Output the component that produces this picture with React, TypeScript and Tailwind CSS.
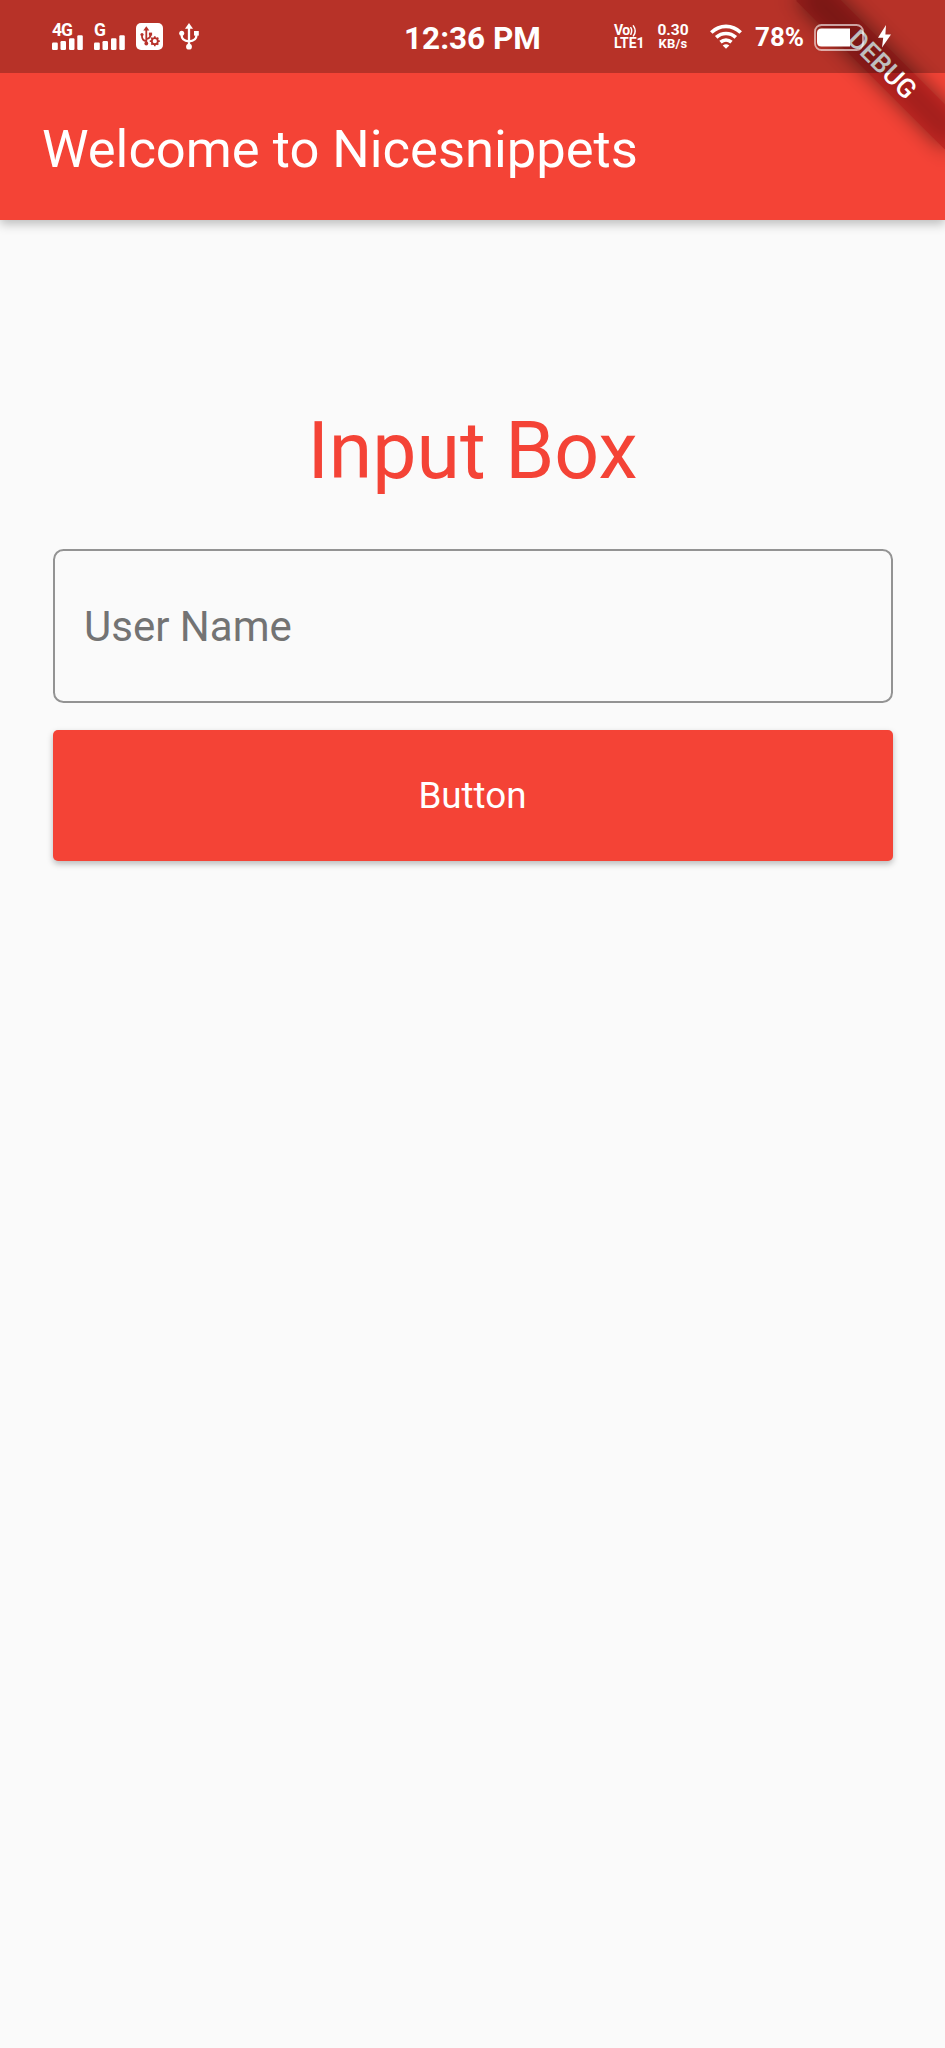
import type { ReactNode } from "react";

function Bars() {
  return (
    <svg width="31" height="15" viewBox="0 0 31 15" fill="#fff">
      <rect x="0" y="7.5" width="5.8" height="7.5" rx="1.2" />
      <rect x="8.5" y="6" width="5.5" height="9" rx="1.2" />
      <rect x="17" y="3.2" width="5.5" height="11.8" rx="1.2" />
      <rect x="25.3" y="0.3" width="5.5" height="14.7" rx="1.2" />
    </svg>
  );
}

function Signal({ label }: { label: string }) {
  return (
    <div className="flex h-[27px] w-[31px] flex-col">
      <span className="h-[12px] text-[17.5px] leading-[15px] font-bold tracking-[-1px]">{label}</span>
      <Bars />
    </div>
  );
}

function UsbDebug() {
  return (
    <svg width="27" height="27" viewBox="0 0 27 27">
      <rect width="27" height="27" rx="5" fill="#fff" />
      <g fill="none" stroke="#b7322b" strokeWidth="1.8">
        <path d="M10.3 6v14.5M10.3 18.2c-3.2-.6-4.3-2-4.3-5v-2M10.3 16c3.2-.6 4.2-1.6 4.2-4v-1" />
        <circle cx="18.8" cy="18.2" r="3" />
        <path strokeWidth="1.7" d="M18.8 15.2v-2M18.8 21.2v2M15.8 18.2h-2M21.8 18.2h2M16.7 16.1l-1.4-1.4M20.9 20.3l1.4 1.4M20.9 16.1l1.4-1.4M16.7 20.3l-1.4 1.4" />
      </g>
      <g fill="#b7322b">
        <path d="M10.3 3.2l3 4.3h-6z" />
        <circle cx="10.3" cy="20.5" r="1.9" />
        <circle cx="6" cy="11.5" r="1.6" />
        <rect x="12.9" y="9.6" width="3.2" height="3" />
      </g>
    </svg>
  );
}

function Usb() {
  return (
    <svg width="20" height="27" viewBox="0 0 20 27" fill="#fff">
      <path d="M10 0l4 5.8H6z" />
      <circle cx="10" cy="23.7" r="2.9" />
      <circle cx="2.7" cy="10.3" r="2.5" />
      <rect x="15" y="8" width="4.8" height="4.6" />
      <path d="M10 4v19M2.7 10.5v2.2c0 3 2.6 5.2 7.3 5.6M17.4 11v1.7c0 3-2.6 5.2-7.4 5.6" fill="none" stroke="#fff" strokeWidth="2.3" />
    </svg>
  );
}

function Volte() {
  return (
    <div className="flex h-[26px] w-[31px] flex-col font-bold">
      <div className="flex h-[12px]">
        <span className="text-[14px] leading-[13px] tracking-[-0.5px]">Vo</span>
        <svg width="8" height="13" viewBox="0 0 8 13" fill="none" stroke="#fff" strokeWidth="1.5" strokeLinecap="round">
          <path d="M.8 3.7q1.8 3 0 6.6M3.4 1.9q3.6 5 0 10" />
        </svg>
      </div>
      <span className="text-[14px] leading-[14px]">LTE1</span>
    </div>
  );
}

function Speed() {
  return (
    <div className="flex h-[26px] w-[32px] flex-col items-center font-bold">
      <span className="h-[14px] text-[15.5px] leading-[13px]">0.30</span>
      <span className="text-[13px] leading-[13px] tracking-[0.2px]">KB/s</span>
    </div>
  );
}

function Wifi() {
  return (
    <svg width="32" height="25" viewBox="0 0 32 25" fill="none" stroke="#fff" strokeWidth="3.6">
      <path d="M1.3 8.5c8.4-8.2 21-8.2 29.4 0" />
      <path d="M6.2 13.4c5.7-5.3 13.9-5.3 19.6 0" />
      <path d="M10.5 18.1c3.3-2.8 7.7-2.8 11 0" />
      <path d="M12.7 21.4q3.3-2.4 6.6 0L16 24.8z" fill="#fff" stroke="none" />
    </svg>
  );
}

function Battery() {
  return (
    <svg width="50" height="27" viewBox="0 0 50 27">
      <rect x="1" y="1" width="48" height="25" rx="6.5" fill="none" stroke="#fff" strokeOpacity=".6" strokeWidth="1.8" />
      <path d="M7.5 4.5H36v18H7.500Q3 22.500 3 18V9Q3 4.500 7.500 4.500z" fill="#fff" />
    </svg>
  );
}

function Bolt() {
  return (
    <svg width="13" height="23" viewBox="0 0 13 23" fill="#fff">
      <path d="M8 0L0 12.8h5.2L4 22.500l9-13H7.400z" />
    </svg>
  );
}

function StatusBar() {
  return (
    <div className="absolute inset-x-0 top-0 z-20 flex h-[73px] items-center bg-black/25 pl-[52px] text-white">
      <div className="flex w-[352px] items-center">
        <Signal label="4G" />
        <div className="ml-[11px]"><Signal label="G" /></div>
        <div className="ml-[11px]"><UsbDebug /></div>
        <div className="ml-[16px]"><Usb /></div>
      </div>
      <span className="w-[210px] pt-[4px] text-[31.5px] leading-[36px] font-bold whitespace-nowrap">12:36 PM</span>
      <div className="flex items-center">
        <Volte />
        <div className="ml-[12px]"><Speed /></div>
        <div className="ml-[21px]"><Wifi /></div>
        <span className="ml-[13px] w-[60px] pt-px text-[26px] leading-[30px] font-bold">78%</span>
        <div className="-ml-px pt-px"><Battery /></div>
        <div className="-mt-px ml-[14px]"><Bolt /></div>
      </div>
    </div>
  );
}

function DebugBanner() {
  return (
    <div className="pointer-events-none absolute inset-0 z-10 overflow-hidden">
      <div className="absolute top-[73.5px] right-[-105px] h-[31.5px] w-[210px] origin-[105px_-73.5px] rotate-45">
        <div className="absolute inset-0 bg-black/50 blur-[10.4px]" />
        <div className="relative flex h-full items-center justify-center bg-[#b71c1c]/63 pl-[2px] text-[26.5px] leading-none font-medium text-white">
          DEBUG
        </div>
      </div>
    </div>
  );
}

function AppBar({ children }: { children: ReactNode }) {
  return (
    <header className="flex h-[220px] items-center bg-[#f44336] pt-[78px] pl-[42px] shadow-[0_4px_10px_rgba(0,0,0,0.25)]">
      <h1 className="text-[52.5px] leading-[62px] whitespace-nowrap text-white">{children}</h1>
    </header>
  );
}

export default function App() {
  return (
    <div className="relative h-[2048px] w-[945px] overflow-hidden bg-[#fafafa] font-['Roboto',sans-serif]">
      <AppBar>Welcome to Nicesnippets</AppBar>
      <DebugBanner />
      <StatusBar />
      <main className="flex flex-col px-[52.5px] pt-[185px]">
        <h2 className="text-center text-[78.75px] leading-[92px] text-[#f44336]">Input Box</h2>
        <input
          type="text"
          placeholder="User Name"
          className="mt-[52px] h-[154px] rounded-[10.5px] border-[2.6px] border-[#939393] bg-transparent px-[29.5px] text-[42px] outline-none placeholder:text-[#737373]"
        />
        <button className="mt-[27px] h-[131px] rounded-[5px] bg-[#f44336] text-[36.75px] text-white shadow-[0_3px_6px_rgba(0,0,0,0.26)]">
          Button
        </button>
      </main>
    </div>
  );
}
